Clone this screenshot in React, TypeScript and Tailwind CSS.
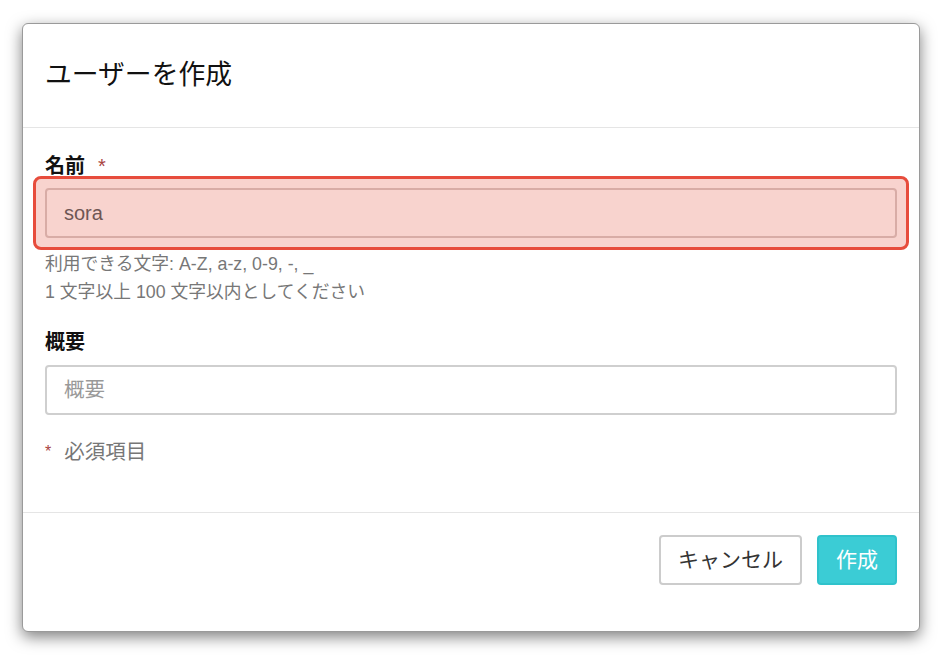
import React from "react";

export default function App() {
  return (
    <div
      className="min-h-[660px] w-[940px] bg-white pt-[23px] pl-[22px]"
      style={{ fontFamily: '"Liberation Sans", "Noto Sans CJK JP", sans-serif' }}
    >
      <div className="w-[898px] rounded-[6px] border border-[#9a9a9a] bg-white shadow-[0_5px_15px_rgba(0,0,0,0.5)]">
        {/* header */}
        <div className="border-b border-[#e5e5e5] px-[22px] pt-[35px] pb-[35px]">
          <h1 className="text-[26.8px] leading-[33px] text-[#111]">ユーザーを作成</h1>
        </div>

        {/* body */}
        <div className="px-[22px] pt-[27px] pb-[47px]">
          <label className="block h-[21px] text-[20px] font-bold leading-[22px] text-[#111]">
            名前<span className="ml-[13px] font-normal text-[#a94442]">*</span>
          </label>
          <div className="-mx-[12px] rounded-[8px] border-[3px] border-[#e74c3c] bg-[#f8d3ce] p-[9px]">
            <div className="flex h-[50px] items-center rounded-[4px] border-2 border-[#d8aca6] px-[17px] text-[20px] text-[#6e5654]">
              sora
            </div>
          </div>
          <div className="text-[17.8px] text-[#777]">
            <div className="h-[28px] leading-[28px]">利用できる文字: A-Z, a-z, 0-9, -, _</div>
            <div className="h-[28px] leading-[28px]">1 文字以上 100 文字以内としてください</div>
          </div>

          <label className="mt-[25px] mb-[12px] block text-[20px] font-bold leading-[22px] text-[#111]">
            概要
          </label>
          <div className="flex h-[50px] items-center rounded-[4px] border-2 border-[#cfcfcf] px-[17px] text-[20.5px] text-[#999]">
            概要
          </div>

          <div className="mt-[24px] flex items-center text-[20.5px] leading-[26px] text-[#777]">
            <span className="text-[16px] text-[#a94442]">*</span>
            <span className="ml-[13px]">必須項目</span>
          </div>
        </div>

        {/* footer */}
        <div className="flex justify-end gap-[15px] border-t border-[#e5e5e5] px-[22px] pt-[22px] pb-[46px]">
          <button className="h-[50px] w-[143px] rounded-[4px] border-2 border-[#cccccc] bg-white text-[21px] text-[#333]">
            キャンセル
          </button>
          <button className="h-[50px] w-[80px] rounded-[4px] border-2 border-[#2fc2cb] bg-[#3bccd5] text-[21px] text-white">
            作成
          </button>
        </div>
      </div>
    </div>
  );
}
